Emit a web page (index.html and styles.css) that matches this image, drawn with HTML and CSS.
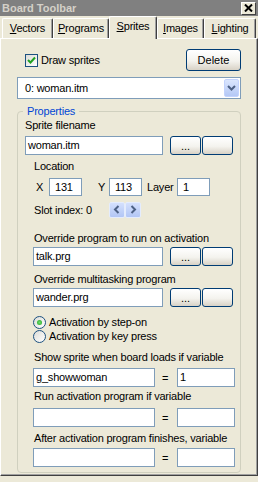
FILE: index.html
```html
<!DOCTYPE html>
<html>
<head>
<meta charset="utf-8">
<title>Board Toolbar</title>
<link rel="stylesheet" href="styles.css">
</head>
<body>
<div class="window">
  <div class="titlebar">
    <span class="title">Board Toolbar</span>
    <span class="close"><svg width="9" height="8" viewBox="0 0 9 8"><path d="M1 0.5 L8 7.5 M8 0.5 L1 7.5" stroke="#000" stroke-width="2" fill="none"/></svg></span>
  </div>
  <div class="tabs">
    <div class="tab t1"><u>V</u>ectors</div>
    <div class="tab t2"><u>P</u>rograms</div>
    <div class="tab t3 active"><u>S</u>prites</div>
    <div class="tab t4"><u>I</u>mages</div>
    <div class="tab t5"><u>L</u>ighting</div>
  </div>
  <div class="panel">
    <div class="toprow">
      <div class="check">
        <span class="cbox"><svg width="11" height="11" viewBox="0 0 11 11"><path d="M2 5 L4.5 7.5 L9 2.5" stroke="#21a121" stroke-width="2" fill="none"/></svg></span>
        <span>Draw sprites</span>
      </div>
      <div class="btn delete">Delete</div>
    </div>
    <div class="combo">
      <span>0: woman.itm</span>
      <span class="ddbtn"><svg width="9" height="6" viewBox="0 0 9 6"><path d="M1 1 L4.5 4.5 L8 1" stroke="#4d6185" stroke-width="2" fill="none"/></svg></span>
    </div>
    <div class="group">
      <div class="legend">Properties</div>
      <div class="lbl l-file">Sprite filename</div>
      <div class="row r-file">
        <div class="in w-file">woman.itm</div>
        <div class="btn small">...</div>
        <div class="btn small"></div>
      </div>
      <div class="lbl ind l-loc">Location</div>
      <div class="row r-loc">
        <span class="lx">X</span>
        <div class="in num">131</div>
        <span class="ly">Y</span>
        <div class="in num">113</div>
        <span class="llayer">Layer</span>
        <div class="in num">1</div>
      </div>
      <div class="row r-slot">
        <span class="slotlbl">Slot index: 0</span>
        <span class="spin"><svg width="8" height="9" viewBox="0 0 8 9"><path d="M5.5 1 L2 4.5 L5.5 8" stroke="#4d6185" stroke-width="2" fill="none"/></svg></span>
        <span class="spin"><svg width="8" height="9" viewBox="0 0 8 9"><path d="M2.5 1 L6 4.5 L2.5 8" stroke="#4d6185" stroke-width="2" fill="none"/></svg></span>
      </div>
      <div class="lbl ind l-ov1">Override program to run on activation</div>
      <div class="row r-prog r-ov1">
        <div class="in w-prog">talk.prg</div>
        <div class="btn small">...</div>
        <div class="btn small"></div>
      </div>
      <div class="lbl ind l-ov2">Override multitasking program</div>
      <div class="row r-prog r-ov2">
        <div class="in w-prog">wander.prg</div>
        <div class="btn small">...</div>
        <div class="btn small"></div>
      </div>
      <div class="radio r-rad1"><span class="rcircle on"><span class="dot"></span></span><span>Activation by step-on</span></div>
      <div class="radio"><span class="rcircle"></span><span>Activation by key press</span></div>
      <div class="lbl ind l-show">Show sprite when board loads if variable</div>
      <div class="row r-var r-show">
        <div class="in w-var">g_showwoman</div>
        <span class="eq">=</span>
        <div class="in w-val">1</div>
      </div>
      <div class="lbl ind l-run">Run activation program if variable</div>
      <div class="row r-var r-run">
        <div class="in w-var"></div>
        <span class="eq">=</span>
        <div class="in w-val"></div>
      </div>
      <div class="lbl ind l-after">After activation program finishes, variable</div>
      <div class="row r-var r-after">
        <div class="in w-var"></div>
        <span class="eq">=</span>
        <div class="in w-val"></div>
      </div>
    </div>
  </div>
</div>
</body>
</html>
```
FILE: styles.css
```css
* { box-sizing: border-box; margin: 0; padding: 0; }
html, body { width: 258px; height: 482px; overflow: hidden; }
body {
  background: #ece9d8;
  font-family: "Liberation Sans", Arial, sans-serif;
  font-size: 11px;
  color: #000;
  letter-spacing: -0.2px;
}
.window { height: 482px; display: flex; flex-direction: column; }

.titlebar {
  height: 16px; flex: none;
  background: #808080;
  display: flex; align-items: center; justify-content: space-between;
  padding: 0 2px 0 2px;
}
.title { color: #d4d0c8; font-weight: bold; letter-spacing: 0; line-height: 16px; }
.close {
  width: 15px; height: 13px;
  background: #ece9d8;
  border: 1px solid; border-color: #fff #404040 #404040 #fff;
  display: flex; align-items: center; justify-content: center;
}

.tabs { height: 22px; flex: none; display: flex; align-items: flex-end; padding-left: 2px; }
.tab {
  height: 20px;
  border-top: 1px solid #fff; border-left: 1px solid #fff; border-right: 1px solid #404040;
  box-shadow: inset -1px 0 #a0a0a0;
  border-radius: 2px 2px 0 0;
  text-align: center; line-height: 18px;
  background: #ece9d8;
}
.t1 { width: 51px; }
.t2 { width: 56px; }
.t3 { width: 48px; }
.t4 { width: 47px; }
.t5 { width: 52px; }
.tab.active { height: 23px; margin-bottom: -1px; line-height: 19px; position: relative; z-index: 1; }

.panel {
  flex: none; height: 438px;
  border-top: 1px solid #fff; border-left: 1px solid #fff;
  border-right: 1px solid #404040; border-bottom: 1px solid #404040;
  box-shadow: inset -1px -1px #a0a0a0;
  padding: 10px 0 0 16px;
}

.toprow { width: 224px; height: 22px; display: flex; align-items: center; justify-content: space-between; padding-left: 8px; }
.check { display: flex; align-items: center; }
.cbox {
  width: 13px; height: 13px; margin-right: 3px;
  border: 1px solid #1c5180;
  background: linear-gradient(135deg, #dcdcd7, #fff);
  display: flex; align-items: center; justify-content: center;
}
.btn {
  border: 1px solid #003c74; border-radius: 3px;
  background: linear-gradient(#ffffff, #f4f3ee 55%, #d8d2c6);
  display: flex; align-items: center; justify-content: center;
  letter-spacing: 0;
}
.delete { width: 55px; height: 22px; }
.small { width: 31px; height: 19px; margin-left: 1px; line-height: 10px; }

.combo {
  margin-top: 6px; width: 224px; height: 22px;
  border: 1px solid #7f9db9; background: #fff;
  display: flex; align-items: center; padding-left: 7px;
}
.ddbtn {
  margin-left: auto; margin-right: 1px;
  width: 15px; height: 18px;
  border: 1px solid #c3d3fd; border-radius: 2px;
  background: linear-gradient(#dbe6fe, #b4c8f6);
  display: flex; align-items: center; justify-content: center;
}

.group {
  margin-top: 12px; width: 224px;
  border: 1px solid #d0d0bf; border-radius: 4px;
  padding: 0 0 5px 7px;
}
.legend {
  width: fit-content; margin: -7px 0 0 -2px; padding: 0 4px;
  background: #ece9d8; color: #0046d5; line-height: 13px;
}
.lbl { line-height: 13px; }
.ind { margin-left: 9px; }
.l-file { margin-top: 1px; }
.row { display: flex; align-items: center; }
.in {
  height: 19px; border: 1px solid #7f9db9; background: #fff;
  padding-left: 2px; line-height: 17px; white-space: nowrap;
}
.r-file { margin-top: 4px; }
.w-file { width: 138px; margin-right: 6px; }
.l-loc { margin-top: 5px; }
.r-loc { margin-top: 5px; height: 18px; }
.num { width: 33px; height: 18px; line-height: 16px; padding-left: 5px; }
.lx { margin-left: 11px; width: 13px; }
.ly { margin-left: 16px; width: 11px; }
.llayer { margin-left: 5px; width: 30px; }
.r-slot { margin-top: 5px; height: 17px; padding-left: 9px; }
.slotlbl { width: 75px; }
.spin {
  width: 16px; height: 16px; margin-right: 0;
  border: 1px solid #e4ecfd; border-radius: 2px;
  background: linear-gradient(#d4e0fd, #b2c6f5);
  display: flex; align-items: center; justify-content: center;
}
.l-ov1 { margin-top: 14px; }
.r-prog { margin-top: 2px; padding-left: 8px; }
.w-prog { width: 130px; margin-right: 6px; }
.l-ov2 { margin-top: 7px; }
.radio { display: flex; align-items: center; height: 14px; padding-left: 8px; }
.r-rad1 { margin-top: 8px; }
.rcircle {
  width: 13px; height: 13px; margin-right: 3px;
  border: 1px solid #1c5180; border-radius: 50%;
  background: linear-gradient(135deg, #dcdcd7, #fff);
  display: flex; align-items: center; justify-content: center;
}
.dot { width: 5px; height: 5px; border-radius: 50%; background: radial-gradient(#6ee06e, #21a121); }
.l-show { margin-top: 8px; }
.r-var { padding-left: 8px; }
.r-show { margin-top: 4px; }
.w-var { width: 122px; }
.eq { width: 22px; padding-left: 7px; }
.w-val { width: 58px; }
.l-run { margin-top: 3px; }
.r-run { margin-top: 5px; }
.l-after { margin-top: 5px; }
.r-after { margin-top: 3px; }
```
